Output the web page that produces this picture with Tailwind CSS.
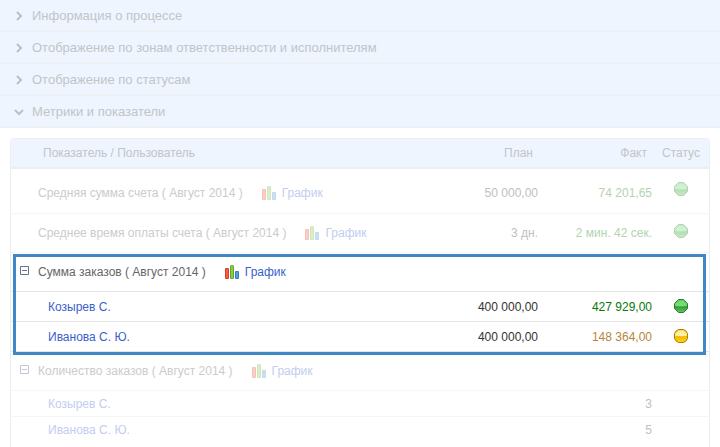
<!DOCTYPE html>
<html lang="ru">
<head>
<meta charset="utf-8">
<meta name="viewport" content="width=device-width, initial-scale=1">
<title>Метрики и показатели</title>
<script src="https://cdn.jsdelivr.net/npm/@tailwindcss/browser@4"></script>
</head>
<body class="bg-white font-['Liberation_Sans',Arial,sans-serif] text-[13px] leading-4 text-[#c4c4c8]">
<svg class="absolute size-0" aria-hidden="true">
  <defs>
    <linearGradient id="gGreen" x1="0" y1="0" x2="0" y2="1"><stop offset="0" stop-color="#5cc85f"/><stop offset=".45" stop-color="#6fd66e"/><stop offset=".55" stop-color="#2f9a35"/><stop offset="1" stop-color="#62c860"/></linearGradient>
    <linearGradient id="gGold" x1="0" y1="0" x2="0" y2="1"><stop offset="0" stop-color="#fbd54a"/><stop offset=".45" stop-color="#ffe98a"/><stop offset=".55" stop-color="#f2b800"/><stop offset="1" stop-color="#ffd21c"/></linearGradient>
  </defs>
  <symbol id="bars" viewBox="0 0 14 14">
    <rect x="0" y="3" width="4" height="11" rx="1" fill="#d93f2b"/><rect x="1" y="4" width="2" height="9" fill="#fa5a40"/>
    <rect x="5" y="0" width="4" height="14" rx="1.5" fill="#5fa62c"/><rect x="6" y="1" width="2" height="12" fill="#8ccc45"/>
    <rect x="10" y="6" width="4" height="8" rx="1" fill="#3580c4"/><rect x="11" y="7" width="2" height="6" fill="#559bdd"/>
  </symbol>
  <symbol id="green" viewBox="0 0 14 14"><path d="M4.5.5h5l4 4v5l-4 4h-5l-4-4v-5z" fill="url(#gGreen)" stroke="#2f7d35"/><path d="M2 5.500 5 2h4l3 3.500v1.500q-5 1.500-10 0z" fill="#8be886" opacity=".45"/></symbol>
  <symbol id="gold" viewBox="0 0 14 14"><path d="M4.500.5h5q3 1 4 4v5q-1 3-4 4h-5q-3-1-4-4v-5q1-3 4-4z" fill="url(#gGold)" stroke="#b07d08"/><path d="M2 5.500 5 2h4l3 3.500v1q-5 1.500-10 0z" fill="#fff8cc" opacity=".6"/></symbol>
  <symbol id="right" viewBox="0 0 10 10"><path d="M3 1 7 5 3 9" fill="none" stroke="currentColor" stroke-width="2"/></symbol>
  <symbol id="down" viewBox="0 0 10 10"><path d="M1 3 5 7 9 3" fill="none" stroke="currentColor" stroke-width="2"/></symbol>
  <symbol id="minus" viewBox="0 0 9 9"><path d="M.5.5h8v8h-8zM2 4.500h5" fill="none" stroke="#64748f"/></symbol>
</svg>
<div class="flex min-h-screen flex-col">
  <nav aria-label="Разделы">
    <button type="button" aria-expanded="false" class="flex h-8 w-full items-center gap-2 border-b-2 border-[#ebf0f7] bg-[#eef5ff] px-[14px] pt-[2px] text-left"><svg class="size-[10px] text-[#bcc0c6]"><use href="#right"/></svg>Информация о процессе</button>
    <button type="button" aria-expanded="false" class="flex h-8 w-full items-center gap-2 border-b-2 border-[#ebf0f7] bg-[#eef5ff] px-[14px] pt-[2px] text-left"><svg class="size-[10px] text-[#bcc0c6]"><use href="#right"/></svg>Отображение по зонам ответственности и исполнителям</button>
    <button type="button" aria-expanded="false" class="flex h-8 w-full items-center gap-2 border-b-2 border-[#ebf0f7] bg-[#eef5ff] px-[14px] pt-[2px] text-left"><svg class="size-[10px] text-[#bcc0c6]"><use href="#right"/></svg>Отображение по статусам</button>
    <button type="button" aria-expanded="true" class="flex h-8 w-full items-center gap-2 border-b-2 border-[#ebf0f7] bg-[#eef5ff] px-[14px] pt-[2px] text-left"><svg class="size-[10px] text-[#bcc0c6]"><use href="#down"/></svg>Метрики и показатели</button>
  </nav>
  <main class="relative mx-[10px] mt-[10px] flex-1 rounded-t border border-b-0 border-[#e9edf6]">
    <table class="w-full table-fixed border-separate border-spacing-0 text-[12px] leading-4 text-[#cbcbcb]">
      <colgroup><col><col class="w-[114px]"><col class="w-[114px]"><col class="w-[56px]"></colgroup>
      <thead class="bg-[#eef5ff] text-[#c4c4c8]">
        <tr class="h-[30px] *:border-b-2 *:border-[#e9eff7] *:p-0 *:font-normal">
          <th class="rounded-tl"><div class="pl-8 text-left">Показатель / Пользователь</div></th>
          <th><div class="pr-[6px] text-right">План</div></th>
          <th><div class="pr-[6px] text-right">Факт</div></th>
          <th class="rounded-tr text-center">Статус</th>
        </tr>
      </thead>
      <tbody class="*:*:border-b *:*:border-[#f6f6f6] *:*:p-0">
        <tr class="h-[45px]">
          <td><div class="flex items-center pt-[3px] pl-[27px]">Средняя сумма счета ( Август 2014 )<a href="#" class="ml-[19px] flex items-center gap-[6px] text-[#c3cdf0]"><svg class="size-[14px] opacity-30"><use href="#bars"/></svg>График</a></div></td>
          <td><div class="pt-1 pr-[1px] text-right text-[#c0bec2]">50 000,00</div></td>
          <td><div class="pt-1 pr-[1px] text-right text-[#b3d3b1]">74 201,65</div></td>
          <td><svg class="mx-auto mb-1 size-[14px] opacity-35" role="img" aria-label="Зелёный"><use href="#green"/></svg></td>
        </tr>
        <tr class="h-[39px]">
          <td><div class="flex items-center pl-[27px]">Среднее время оплаты счета ( Август 2014 )<a href="#" class="ml-[19px] flex items-center gap-[6px] text-[#c3cdf0]"><svg class="size-[14px] opacity-30"><use href="#bars"/></svg>График</a></div></td>
          <td><div class="pr-[1px] text-right text-[#c0bec2]">3 дн.</div></td>
          <td><div class="pr-[1px] text-right text-[#b3d3b1]">2 мин. 42 сек.</div></td>
          <td><svg class="mx-auto mb-1 size-[14px] opacity-35" role="img" aria-label="Зелёный"><use href="#green"/></svg></td>
        </tr>
      </tbody>
      <tbody class="text-[#333] *:*:border-b *:*:border-[#e4e4e4] *:*:p-0">
        <tr class="h-[39px]">
          <td><div class="flex items-center pl-[9px] text-[#666]"><button type="button" aria-label="Свернуть" class="mr-[9px] mb-1"><svg class="size-[9px]"><use href="#minus"/></svg></button>Сумма заказов ( Август 2014 )<a href="#" class="ml-[19px] flex items-center gap-[6px] text-[#3a5fcd]"><svg class="size-[14px]"><use href="#bars"/></svg>График</a></div></td>
          <td></td><td></td><td></td>
        </tr>
        <tr class="h-[30px]">
          <td><a href="#" class="pl-[37px] text-[#3a5fcd]">Козырев С.</a></td>
          <td><div class="pr-[1px] text-right">400 000,00</div></td>
          <td><div class="pr-[1px] text-right text-[#087808]">427 929,00</div></td>
          <td><svg class="mx-auto mb-[2px] size-[14px]" role="img" aria-label="Зелёный"><use href="#green"/></svg></td>
        </tr>
        <tr class="h-[30px]">
          <td><a href="#" class="pl-[37px] text-[#3a5fcd]">Иванова С. Ю.</a></td>
          <td><div class="pr-[1px] text-right">400 000,00</div></td>
          <td><div class="pr-[1px] text-right text-[#b8863b]">148 364,00</div></td>
          <td><svg class="mx-auto mb-[2px] size-[14px]" role="img" aria-label="Жёлтый"><use href="#gold"/></svg></td>
        </tr>
      </tbody>
      <tbody class="*:*:border-[#f6f6f6] *:*:p-0">
        <tr class="h-[39px] *:border-b">
          <td><div class="flex items-center pl-[9px]"><button type="button" aria-label="Свернуть" class="mr-[9px] mb-1 opacity-40"><svg class="size-[9px]"><use href="#minus"/></svg></button>Количество заказов ( Август 2014 )<a href="#" class="ml-[19px] flex items-center gap-[6px] text-[#c3cdf0]"><svg class="size-[14px] opacity-30"><use href="#bars"/></svg>График</a></div></td>
          <td></td><td></td><td></td>
        </tr>
        <tr class="h-[26px] *:border-b">
          <td><a href="#" class="pl-[37px] text-[#c3cdf0]">Козырев С.</a></td><td></td><td><div class="pr-[1px] text-right text-[#c0bec2]">3</div></td><td></td>
        </tr>
        <tr class="h-[26px]">
          <td><a href="#" class="pl-[37px] text-[#c3cdf0]">Иванова С. Ю.</a></td><td></td><td><div class="pr-[1px] text-right text-[#c0bec2]">5</div></td><td></td>
        </tr>
      </tbody>
    </table>
    <div class="pointer-events-none absolute top-[115px] right-[3px] left-[2px] h-[101px] border-3 border-[#3f88c5]"></div>
  </main>
</div>
</body>
</html>
